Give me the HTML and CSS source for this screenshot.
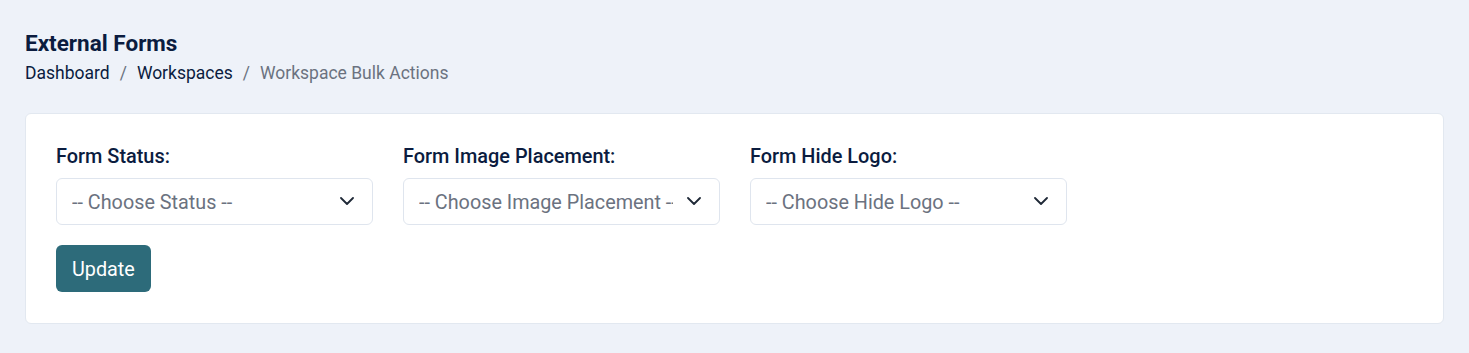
FILE: index.html
```html
<!DOCTYPE html>
<html lang="en">
<head>
<meta charset="utf-8">
<title>External Forms</title>
<link rel="stylesheet" href="styles.css">
</head>
<body>
<div class="page">
  <div class="header">
    <h1 class="title">External Forms</h1>
    <nav class="crumbs">
      <a class="crumb" href="#">Dashboard</a>
      <span class="sep">/</span>
      <a class="crumb" href="#">Workspaces</a>
      <span class="sep">/</span>
      <span class="crumb current">Workspace Bulk Actions</span>
    </nav>
  </div>
  <div class="card">
    <div class="fields">
      <div class="field">
        <label class="label">Form Status:</label>
        <div class="select-wrap">
          <select class="select"><option>-- Choose Status --</option></select>
          <svg class="chev" width="14" height="8" viewBox="0 0 14 8"><path d="M1 1l6 6 6-6" fill="none" stroke="#1f2937" stroke-width="1.8" stroke-linecap="round" stroke-linejoin="round"/></svg>
        </div>
      </div>
      <div class="field">
        <label class="label">Form Image Placement:</label>
        <div class="select-wrap">
          <select class="select"><option>-- Choose Image Placement --</option></select>
          <svg class="chev" width="14" height="8" viewBox="0 0 14 8"><path d="M1 1l6 6 6-6" fill="none" stroke="#1f2937" stroke-width="1.8" stroke-linecap="round" stroke-linejoin="round"/></svg>
        </div>
      </div>
      <div class="field">
        <label class="label">Form Hide Logo:</label>
        <div class="select-wrap">
          <select class="select"><option>-- Choose Hide Logo --</option></select>
          <svg class="chev" width="14" height="8" viewBox="0 0 14 8"><path d="M1 1l6 6 6-6" fill="none" stroke="#1f2937" stroke-width="1.8" stroke-linecap="round" stroke-linejoin="round"/></svg>
        </div>
      </div>
    </div>
    <button class="btn" type="button">Update</button>
  </div>
</div>
</body>
</html>
```
FILE: styles.css
```css
* { box-sizing: border-box; }
html, body { margin: 0; padding: 0; }
body {
  background: #eef2f9;
  font-family: Roboto, "Liberation Sans", sans-serif;
  color: #0b1c3f;
}
.page {
  padding: 29px 25px 30px 25px;
}
.header {
  display: flex;
  flex-direction: column;
  gap: 4px;
  margin-bottom: 28px;
}
.title {
  margin: 0;
  font-size: 22.5px;
  line-height: 28px;
  font-weight: 700;
  color: #0b1c3f;
}
.crumbs {
  display: flex;
  align-items: center;
  font-size: 17.5px;
  line-height: 24px;
}
.crumb {
  color: #0b1c3f;
  text-decoration: none;
}
.crumb.current { color: #6b7280; }
.sep {
  color: #6b7280;
  margin: 0 10px;
}
.card {
  background: #ffffff;
  border: 1px solid #e2e8f0;
  border-radius: 6px;
  padding: 31px 30px 31px 30px;
  display: flex;
  flex-direction: column;
  align-items: flex-start;
  gap: 20px;
}
.fields {
  display: flex;
  gap: 30px;
}
.field {
  width: 317px;
  display: flex;
  flex-direction: column;
  gap: 9px;
}
.label {
  font-size: 19.9px;
  line-height: 24px;
  font-weight: 500;
  color: #0b1c3f;
}
.select-wrap {
  position: relative;
}
.select {
  appearance: none;
  -webkit-appearance: none;
  width: 100%;
  height: 47px;
  border: 1px solid #dfe5ee;
  border-radius: 6px;
  background: #fff;
  padding: 1px 46px 0 15px;
  font-family: Roboto, "Liberation Sans", sans-serif;
  font-size: 19.8px;
  color: #6b7280;
}
.chev {
  position: absolute;
  right: 19px;
  top: 19px;
  pointer-events: none;
}
.btn {
  height: 47px;
  padding: 1px 16px 0 16px;
  border: none;
  border-radius: 6px;
  background: #2d6b7a;
  color: #ffffff;
  font-family: Roboto, "Liberation Sans", sans-serif;
  font-size: 19.8px;
}
```
